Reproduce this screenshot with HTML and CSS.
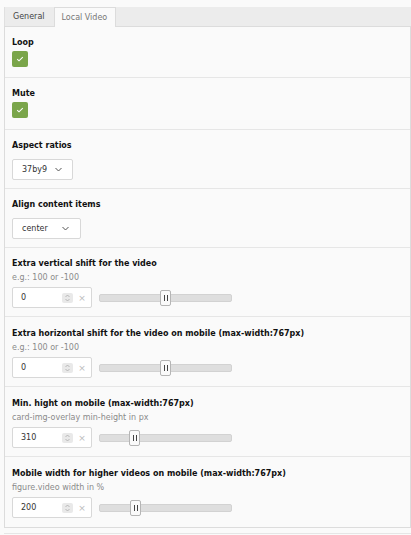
FILE: index.html
```html
<!DOCTYPE html>
<html>
<head>
<meta charset="utf-8">
<link rel="stylesheet" href="styles.css">
</head>
<body>
<div class="wrap">
  <div class="tabs">
    <div class="tab">General</div>
    <div class="tab active">Local Video</div>
  </div>
  <div class="panel">
    <div class="row row-check">
      <div class="label">Loop</div>
      <div class="check"><svg width="8" height="6" viewBox="0 0 8 6"><path d="M1.2 3.2 L3 4.8 L6.8 1.2" fill="none" stroke="#fff" stroke-width="1.1"/></svg></div>
    </div>
    <div class="row row-check row-check2">
      <div class="label">Mute</div>
      <div class="check"><svg width="8" height="6" viewBox="0 0 8 6"><path d="M1.2 3.2 L3 4.8 L6.8 1.2" fill="none" stroke="#fff" stroke-width="1.1"/></svg></div>
    </div>
    <div class="row row-select">
      <div class="label">Aspect ratios</div>
      <div class="select sel-a"><span>37by9</span><svg width="7" height="5" viewBox="0 0 7 5"><path d="M0.5 1 L3.5 4 L6.5 1" fill="none" stroke="#555" stroke-width="1"/></svg></div>
    </div>
    <div class="row row-select">
      <div class="label">Align content items</div>
      <div class="select sel-b"><span>center</span><svg width="7" height="5" viewBox="0 0 7 5"><path d="M0.5 1 L3.5 4 L6.5 1" fill="none" stroke="#555" stroke-width="1"/></svg></div>
    </div>
    <div class="row row-num row-first">
      <div class="label">Extra vertical shift for the video</div>
      <div class="desc">e.g.: 100 or -100</div>
      <div class="ctrl">
        <div class="num"><span class="val">0</span><span class="spin"><svg width="5" height="8" viewBox="0 0 5 8"><path d="M0.5 3 L2.5 1 L4.5 3 M0.5 5 L2.5 7 L4.5 5" fill="none" stroke="#aaa" stroke-width="0.8"/></svg></span><span class="clear">×</span></div>
        <div class="track"><div class="handle" style="left:60px"><i></i><i></i></div></div>
      </div>
    </div>
    <div class="row row-num">
      <div class="label">Extra horizontal shift for the video on mobile (max-width:767px)</div>
      <div class="desc">e.g.: 100 or -100</div>
      <div class="ctrl">
        <div class="num"><span class="val">0</span><span class="spin"><svg width="5" height="8" viewBox="0 0 5 8"><path d="M0.5 3 L2.5 1 L4.5 3 M0.5 5 L2.5 7 L4.5 5" fill="none" stroke="#aaa" stroke-width="0.8"/></svg></span><span class="clear">×</span></div>
        <div class="track"><div class="handle" style="left:60px"><i></i><i></i></div></div>
      </div>
    </div>
    <div class="row row-num">
      <div class="label">Min. hight on mobile (max-width:767px)</div>
      <div class="desc">card-img-overlay min-height in px</div>
      <div class="ctrl">
        <div class="num"><span class="val">310</span><span class="spin"><svg width="5" height="8" viewBox="0 0 5 8"><path d="M0.5 3 L2.5 1 L4.5 3 M0.5 5 L2.5 7 L4.5 5" fill="none" stroke="#aaa" stroke-width="0.8"/></svg></span><span class="clear">×</span></div>
        <div class="track"><div class="handle" style="left:29px"><i></i><i></i></div></div>
      </div>
    </div>
    <div class="row row-num">
      <div class="label">Mobile width for higher videos on mobile (max-width:767px)</div>
      <div class="desc">figure.video width in %</div>
      <div class="ctrl">
        <div class="num"><span class="val">200</span><span class="spin"><svg width="5" height="8" viewBox="0 0 5 8"><path d="M0.5 3 L2.5 1 L4.5 3 M0.5 5 L2.5 7 L4.5 5" fill="none" stroke="#aaa" stroke-width="0.8"/></svg></span><span class="clear">×</span></div>
        <div class="track"><div class="handle" style="left:30px"><i></i><i></i></div></div>
      </div>
    </div>
  </div>
  <div class="foot"></div>
</div>
</body>
</html>
```
FILE: styles.css
```css
html, body {
  margin: 0;
  padding: 0;
  background: #fafafa;
}
body {
  font-family: "DejaVu Sans", Verdana, sans-serif;
  font-size: 8px;
  color: #222;
}
.wrap {
  padding: 7px 0 0 4px;
}
.tabs {
  display: flex;
  height: 20px;
  background: #ececec;
  border-bottom: 1px solid #dcdcdc;
  box-sizing: border-box;
}
.tab {
  padding: 0 9px 0 8px;
  line-height: 19px;
  color: #444;
  border-left: 1px solid #e0e0e0;
}
.tab.active {
  background: #fafafa;
  color: #777;
  border: 1px solid #dcdcdc;
  border-bottom: none;
  height: 20px;
  box-sizing: border-box;
  line-height: 19px;
  padding: 0 8px 0 7px;
}
.panel {
  border-left: 1px solid #dcdcdc;
  border-right: 1px solid #dcdcdc;
  border-bottom: 1px solid #dcdcdc;
  background: #fafafa;
}
.row {
  padding: 9px 7px 8px;
  border-bottom: 1px solid #e6e6e6;
}
.row:last-child {
  border-bottom: none;
  padding-bottom: 9px;
}
.label {
  font-weight: bold;
  line-height: 14px;
  color: #111;
}
.row-check .label {
  margin-bottom: 1px;
}
.row-check {
  padding-bottom: 10px;
}
.row-check2 {
  padding-bottom: 11px;
}
.check {
  width: 16px;
  height: 16px;
  background: #7aa54a;
  border-radius: 2px;
  display: flex;
  align-items: center;
  justify-content: center;
}
.row-select .label {
  margin-bottom: 6px;
}
.select {
  height: 21px;
  box-sizing: border-box;
  background: #fff;
  border: 1px solid #d8d8d8;
  border-radius: 2px;
  display: flex;
  align-items: center;
  padding-left: 9px;
  color: #333;
}
.select span {
  flex: 1;
}
.sel-a {
  width: 61px;
  padding-right: 10px;
}
.sel-b {
  width: 69px;
  padding-right: 11px;
}
.row-num {
  padding-top: 10px;
}
.row-first {
  padding-top: 9px;
}
.desc {
  color: #8a8a8a;
  line-height: 13px;
  margin-bottom: 3px;
}
.ctrl {
  display: flex;
  align-items: center;
  gap: 7px;
}
.num {
  width: 80px;
  height: 21px;
  box-sizing: border-box;
  background: #fff;
  border: 1px solid #d8d8d8;
  border-radius: 2px;
  display: flex;
  align-items: center;
  padding-left: 8px;
  color: #333;
}
.val {
  flex: 1;
}
.spin {
  width: 11px;
  height: 10px;
  background: #e9e9e9;
  border-radius: 2px;
  display: flex;
  align-items: center;
  justify-content: center;
}
.clear {
  color: #bbb;
  font-size: 9px;
  width: 18px;
  text-align: center;
}
.track {
  position: relative;
  width: 133px;
  height: 8px;
  box-sizing: border-box;
  background: #dedede;
  border: 1px solid #d2d2d2;
  border-radius: 2px;
}
.handle {
  position: absolute;
  top: -5px;
  width: 11px;
  height: 16px;
  box-sizing: border-box;
  background: #fafafa;
  border: 1px solid #b5b5b5;
  border-radius: 2px;
  display: flex;
  align-items: center;
  justify-content: center;
  gap: 2px;
}
.handle i {
  display: block;
  width: 1px;
  height: 6px;
  background: #444;
}
.foot {
  height: 5px;
  border-bottom: 1px solid #e6e6e6;
}
```
